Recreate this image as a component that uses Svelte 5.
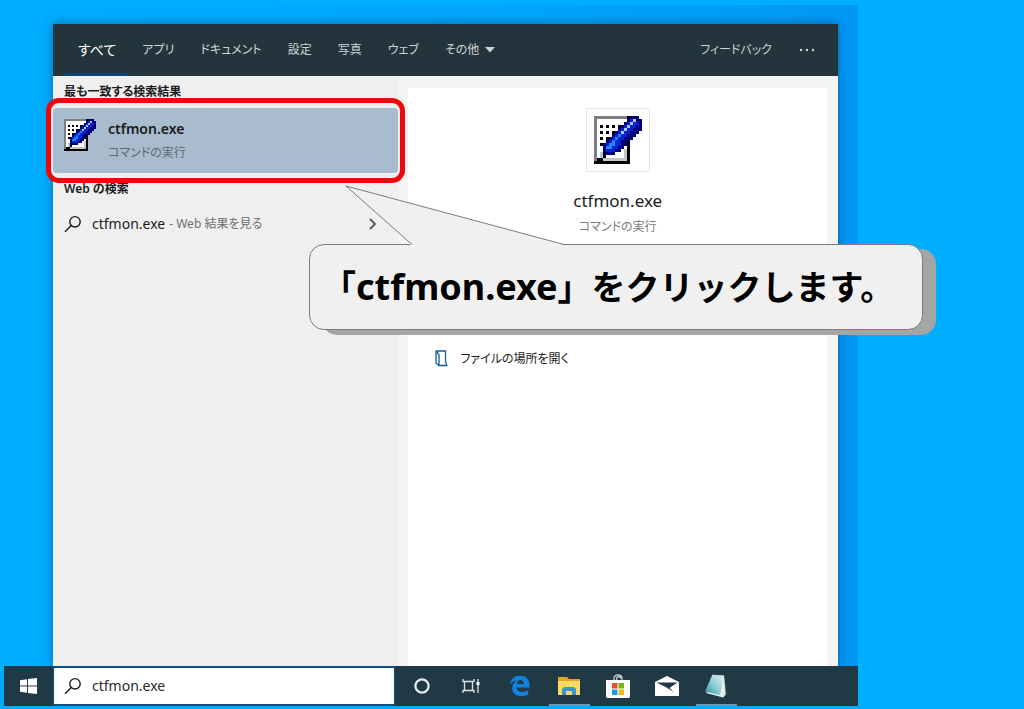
<script>
  const tabs = ['すべて', 'アプリ', 'ドキュメント', '設定', '写真', 'ウェブ'];
  let query = $state('ctfmon.exe');

  const palette = {
    g: '#7f7f7f', w: '#ffffff', k: '#000000', s: '#c4c4c4',
    n: '#00007c', b: '#0a22cf', c: '#1d86ff', l: '#a9c4f5'
  };
  const bitmap = [
    'gggggggggggknnn.',
    'gwwwwwwwwwwnblnn',
    'gwwwwwwwwwnblbbn',
    'gwkwkwkwknblbbnn',
    'gwwwwwwwnblbbnnn',
    'gwkwkwknblbbnnn.',
    'gwwwwwnbcbbnnn..',
    'gwkwknbcbbnnn...',
    'gwwwnbcbbnnk....',
    'gwknbccbbnnk....',
    'gwwnccbbnnwk....',
    'gwwnbbbnnwsk....',
    'gwlknnnwwwsk....',
    'gwlkwwwwwwsk....',
    'gkkssssssssk....',
    'kkkkkkkkkkkk....'
  ];
  const pixels = bitmap.flatMap((row, y) =>
    [...row].flatMap((ch, x) => (ch === '.' ? [] : [{ x, y, fill: palette[ch] }]))
  );
</script>

{#snippet appIcon(size)}
  <svg width={size} height={size} viewBox="0 0 16 16" shape-rendering="crispEdges" aria-hidden="true">
    {#each pixels as p}
      <rect x={p.x} y={p.y} width="1" height="1" fill={p.fill} />
    {/each}
  </svg>
{/snippet}

{#snippet magnifier()}
  <svg width="18" height="18" viewBox="0 0 18 18" fill="none" stroke="currentColor" stroke-width="1.4" aria-hidden="true">
    <circle cx="11" cy="6.8" r="5.2" />
    <path d="M7.2 10.6 1 16.8" />
  </svg>
{/snippet}

<div class="page">
  <div class="desktop">
    <section class="window">
      <header>
        <nav>
          {#each tabs as tab, i}
            <button class="tab" class:active={i === 0}>{tab}</button>
          {/each}
          <button class="tab more">
            その他
            <svg width="10" height="6" viewBox="0 0 10 6" aria-hidden="true"><path d="M0 0h10L5 5.5z" fill="currentColor" /></svg>
          </button>
        </nav>
        <button class="tab">フィードバック</button>
        <button class="tab dots" aria-label="その他のオプション">
          <svg width="16" height="4" viewBox="0 0 16 4" fill="currentColor" aria-hidden="true">
            <circle cx="2" cy="2" r="1.2" /><circle cx="8" cy="2" r="1.2" /><circle cx="14" cy="2" r="1.2" />
          </svg>
        </button>
      </header>
      <div class="content">
        <div class="results">
          <h2>最も一致する検索結果</h2>
          <div class="best">
            <button class="best-item">
              {@render appIcon(32)}
              <span class="lines"><strong>ctfmon.exe</strong><small>コマンドの実行</small></span>
            </button>
          </div>
          <h2>Web の検索</h2>
          <button class="web-item">
            {@render magnifier()}
            <span class="term">ctfmon.exe</span>
            <span class="hint">- Web 結果を見る</span>
            <svg class="chevron" width="8" height="12" viewBox="0 0 8 12" fill="none" stroke="#555" stroke-width="1.8" aria-hidden="true"><path d="m1 1 5 5-5 5" /></svg>
          </button>
        </div>
        <div class="detail">
          <div class="summary">
            <div class="frame">{@render appIcon(48)}</div>
            <h1>ctfmon.exe</h1>
            <p>コマンドの実行</p>
          </div>
          <button class="open">
            <svg width="14" height="18" viewBox="0 0 14 18" fill="none" stroke="#1a5c97" stroke-width="1.3" aria-hidden="true">
              <path d="M5 15.500 2 13V1h9.500v10l1.300 4.500H5V5L2.500 1.500" />
            </svg>
            ファイルの場所を開く
          </button>
        </div>
      </div>
    </section>

    <footer class="taskbar">
      <button class="task start" aria-label="スタート">
        <svg width="17" height="16" viewBox="0 0 17 16" fill="#fff" aria-hidden="true">
          <path d="M0 2.3 7 1.2v6.3H0zM8 1l9-1v7.5H8zM0 8.5h7v6.3l-7-1zM8 8.5h9V16l-9-1.100z" />
        </svg>
      </button>
      <label class="search">
        {@render magnifier()}
        <input type="text" aria-label="検索" bind:value={query} />
      </label>
      <div class="apps">
        <button class="task" aria-label="Cortana">
          <svg width="18" height="18" viewBox="0 0 18 18" aria-hidden="true"><circle cx="9" cy="9" r="6.600" fill="none" stroke="#e4e8ea" stroke-width="2.300" /></svg>
        </button>
        <button class="task" aria-label="タスク ビュー">
          <svg width="18" height="18" viewBox="0 0 18 18" fill="none" stroke="#dce2e4" stroke-width="1.300" aria-hidden="true">
            <path d="M1 2v2.500h11V2M1 16v-2.500h11V16M2.500 4.500v9M10.500 4.500v9M16 2v14" />
            <path d="M14.500 5h3v3h-3z" fill="#fff" stroke="none" />
          </svg>
        </button>
        <button class="task" aria-label="Edge">
          <svg width="20" height="22" viewBox="0 0 20 22" aria-hidden="true">
            <path fill="#1282de" d="M0 9.500C.8 4 4.500.8 10 .8c6 0 9.500 4 9.500 9.200v2.600H6.700c.2 3.100 2.500 4.400 5.500 4.400 2.200 0 4.200-.6 6-1.700v4.300c-1.900 1.100-4.300 1.700-7 1.700-5.600 0-9-3.200-9-8.200 0-3.500 1.700-6.100 4.700-7.700C3.900 5.700 1.500 7.100 0 9.500zm6.900-.6h6.700c0-2.500-1.100-3.900-3.200-3.900-1.900 0-3.200 1.500-3.500 3.900z" />
          </svg>
        </button>
        <button class="task running" aria-label="エクスプローラー">
          <svg width="22" height="18" viewBox="0 0 22 18" aria-hidden="true">
            <path fill="#dca62b" d="M0 0h9l2 2h11v6H0z" />
            <path fill="#fbd768" d="M0 4h22v14H0z" />
            <path fill="#3c94cf" d="M4 18v-6l2-2h10l2 2v6h-4v-4H8v4z" />
          </svg>
        </button>
        <button class="task" aria-label="Microsoft Store">
          <svg width="24" height="24" viewBox="0 0 24 24" aria-hidden="true">
            <path d="M8 7V4.500C8 2 9.600 1 12 1s4 1 4 3.500V7M10.500 7V5c0-3 5-3 5 0" fill="none" stroke="#bfc7ca" stroke-width="1.300" />
            <path fill="#fff" d="M0 6h24v16.500c0 .8-.7 1.500-1.500 1.500h-21C.7 24 0 23.300 0 22.500z" />
            <path fill="#e8502d" d="M6 9h5.500v5.500H6z" /><path fill="#74b31b" d="M12.500 9H18v5.500h-5.500z" />
            <path fill="#1a9ee0" d="M6 15.500h5.500V21H6z" /><path fill="#f9b71a" d="M12.500 15.500H18V21h-5.500z" />
          </svg>
        </button>
        <button class="task" aria-label="メール">
          <svg width="24" height="20" viewBox="0 0 24 20" aria-hidden="true">
            <path fill="#fff" d="M0 6 12 0l12 6v14H0z" />
            <path fill="#203a45" d="m1.500 6.500 21 0-8 5.500 4.500 4.500-7.500-5z" />
          </svg>
        </button>
        <button class="task running" aria-label="メモ帳">
          <svg width="24" height="24" viewBox="0 0 24 24" aria-hidden="true">
            <defs>
              <linearGradient id="pad" x1="0" y1="1" x2="1" y2="0">
                <stop offset="0" stop-color="#2d8ca0" /><stop offset=".5" stop-color="#8fd0d8" /><stop offset="1" stop-color="#dff1f3" />
              </linearGradient>
            </defs>
            <path fill="#9a8660" d="m20 2 2.500 18-3 3.500z" />
            <path fill="#e8f0f0" d="m20 1.500 1.200 19-2 3L2 19z" />
            <path fill="url(#pad)" d="M8 1.500 20 2l-4 19L1 17.500z" />
            <path d="M8 1.500 20 2" stroke="#c7d3d4" stroke-width="1.500" />
          </svg>
        </button>
      </div>
    </footer>
  </div>

  <aside class="callout">
    <svg class="tail" width="220" height="61" viewBox="0 0 220 61" aria-hidden="true">
      <path d="M67 61 1 1l218 59v1z" fill="#f0f0f0" />
      <path d="M67 59.500 1 1l218 58.500" fill="none" stroke="#7c7c7c" />
    </svg>
    <p>「<span>ctfmon.exe</span>」をクリックします。</p>
  </aside>
</div>

<style>
  :global(body) { margin: 0; }

  .page {
    position: relative;
    display: flex;
    box-sizing: border-box;
    min-height: 100vh;
    padding: 5px 166px 3px 4px;
    overflow: hidden;
    background: #00aeff;
    color: #1b1b1b;
    font-family: "Noto Sans", "Noto Sans CJK JP", sans-serif;
    font-size: 12px;
    line-height: 20px;
    font-feature-settings: "palt";
  }
  .desktop {
    flex: 1;
    display: flex;
    flex-direction: column;
    overflow: hidden;
    background: linear-gradient(90deg, #00aeff, #00a6fc 60%, #0098f5);
  }
  button {
    padding: 0;
    border: 0;
    background: none;
    color: inherit;
    font: inherit;
    font-feature-settings: inherit;
    text-align: left;
  }
  svg { display: block; flex: none; }
  h1, h2, p { margin: 0; }

  .window {
    flex: 1;
    display: flex;
    flex-direction: column;
    margin: 19px 20px 0 49px;
    background: #f4f4f4;
    box-shadow: 0 0 10px rgba(0, 40, 90, 0.5);
  }
  header {
    display: flex;
    height: 52px;
    padding: 0 23px 0 12px;
    background: #24343c;
    color: #cfd4d6;
  }
  nav { flex: 1; display: flex; }
  .tab {
    padding: 0 13px;
    border: solid transparent;
    border-width: 2px 0 3px;
    white-space: nowrap;
  }
  .tab.active {
    border-bottom-color: #07437c;
    color: #fff;
    font-size: 14px;
  }
  .more { display: flex; align-items: center; gap: 6px; }
  .tab.dots { padding: 0 0 0 14px; }

  .content { flex: 1; display: flex; }
  .results { flex: 0 0 44%; background: #efefef; }
  h2 {
    padding: 6px 11px;
    font-size: 12px;
    line-height: 20px;
    font-weight: 600;
  }
  .best {
    position: relative;
    box-sizing: border-box;
    width: calc(100% + 14px);
    height: 85px;
    margin: -10px -7px;
    padding: 5px 2px;
    border: 5px solid #ee070b;
    border-radius: 13px;
    background: #efefef;
  }
  .best-item {
    display: flex;
    align-items: flex-start;
    gap: 12px;
    box-sizing: border-box;
    width: 100%;
    height: 65px;
    padding: 11px;
    border-radius: 4px;
    background: #a8bccd;
  }
  .lines { display: flex; flex-direction: column; gap: 4px; }
  .lines strong { font-size: 14px; font-weight: 600; }
  .lines small { font-size: 12px; color: #5d6973; }
  .web-item {
    display: flex;
    align-items: center;
    width: 100%;
    height: 38px;
    padding: 0 21px 0 11px;
  }
  .term { margin-left: 10px; font-size: 14px; }
  .hint { margin-left: 4px; color: #707070; }
  .chevron { margin-left: auto; }

  .detail {
    flex: 1;
    margin: 12px 11px 0 10px;
    padding-top: 20px;
    background: #fff;
  }
  .summary {
    display: flex;
    flex-direction: column;
    align-items: center;
    height: 241px;
  }
  .frame {
    display: grid;
    place-items: center;
    width: 62px;
    height: 62px;
    border: 1px solid #e6e6e6;
  }
  h1 { margin: 17px 0 4px; font-size: 17px; line-height: 24px; font-weight: 400; }
  .summary p { color: #7a7a7a; }
  .open {
    display: flex;
    align-items: center;
    gap: 12px;
    padding-left: 26px;
  }

  .taskbar {
    position: relative;
    display: flex;
    height: 40px;
    background: #203a45;
  }
  .task {
    display: grid;
    place-items: center;
    width: 49px;
    height: 40px;
  }
  .apps .running {
    width: 41px;
    margin: 0 4px;
    box-shadow: inset 0 -2px #5c9dc4;
  }
  .search {
    flex: 0 0 40%;
    display: flex;
    align-items: center;
    gap: 10px;
    box-sizing: border-box;
    padding-left: 10px;
    border: solid #0b4f86;
    border-width: 2px 1px;
    background: #fff;
  }
  .search input {
    flex: 1;
    min-width: 0;
    padding: 0;
    border: 0;
    outline: 0;
    background: none;
    color: #2b2b2b;
    font: inherit;
    font-size: 14px;
  }
  .apps { display: flex; padding-left: 3px; }

  .callout {
    position: absolute;
    top: 244px;
    left: 309px;
    right: 101px;
    box-sizing: border-box;
    padding: 18px 12px;
    border: 1px solid #7c7c7c;
    border-radius: 15px;
    background: #f0f0f0;
    box-shadow: 13px 5px #a5a5a5;
    color: #000;
  }
  .tail { position: absolute; left: 35px; top: -60px; }
  .callout p {
    font-size: 34px;
    line-height: 48px;
    font-weight: 700;
    font-feature-settings: normal;
    white-space: nowrap;
  }
  .callout span { font-size: 36px; }
</style>
